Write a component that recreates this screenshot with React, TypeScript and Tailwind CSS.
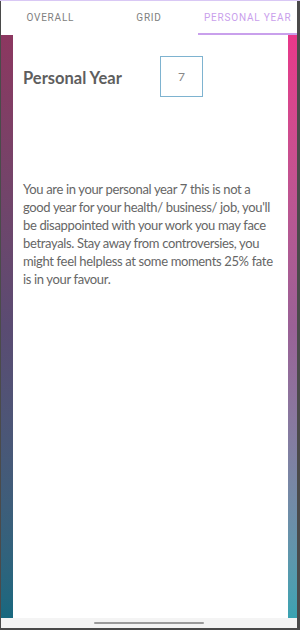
import React from 'react';

const tabs = ['Overall', 'Grid', 'Personal Year'];

const App: React.FC = () => {
  const active = 2;

  return (
    <div className="w-[300px] h-[630px] flex flex-col bg-[#4a4a4a] pl-[1px] pr-[3px] pb-[2px] overflow-hidden" style={{ fontFamily: 'Lato, "Open Sans", sans-serif' }}>
      <div className="h-[1px] bg-[#d9c8f5] -mr-[3px] -ml-[1px]" />
      <div className="h-[34px] bg-white flex" style={{ fontFamily: 'Roboto, sans-serif' }}>
        {tabs.map((t, i) => (
          <div key={t} className="flex-1 flex flex-col">
            <div className={`flex-1 flex items-center justify-center pt-[1px] text-[10px] uppercase tracking-[0.08em] whitespace-nowrap ${i === active ? 'text-[#c9a0ec]' : 'text-[#808080]'}`}>
              {t}
            </div>
            <div className={`h-[2px] ${i === active ? 'bg-[#c9a0ec]' : 'bg-transparent'}`} />
          </div>
        ))}
      </div>
      <div className="flex-1 flex min-h-0">
        <div className="w-[12px] bg-gradient-to-b from-[#8c3760] via-[#5a4b72] to-[#17687f]" />
        <div className="flex-1 bg-white px-[10px] pt-[21px]">
          <div className="flex items-center">
            <h2 className="w-[137px] pt-[3px] text-[16.5px] font-bold text-[#5e5e5e]">Personal Year</h2>
            <div className="w-[43px] h-[41px] border border-[#7eb3d0] flex items-center justify-center text-[12px] text-[#888]">
              7
            </div>
          </div>
          <p className="mt-[83px] text-[13px] leading-[18px] tracking-[-0.35px] text-[#666] pr-[2px]">
            You are in your personal year 7 this is not a good year for your health/ business/ job, you'll be disappointed with your work you may face betrayals. Stay away from controversies, you might feel helpless at some moments 25% fate is in your favour.
          </p>
        </div>
        <div className="w-[9px] bg-gradient-to-b from-[#e8378a] via-[#9a6196] to-[#3aa3b2]" />
      </div>
      <div className="h-[10px] bg-[#f4f4f4] flex justify-center items-center">
        <div className="w-[110px] h-[2px] rounded-full bg-[#9a9a9a]" />
      </div>
    </div>
  );
};

export default App;
